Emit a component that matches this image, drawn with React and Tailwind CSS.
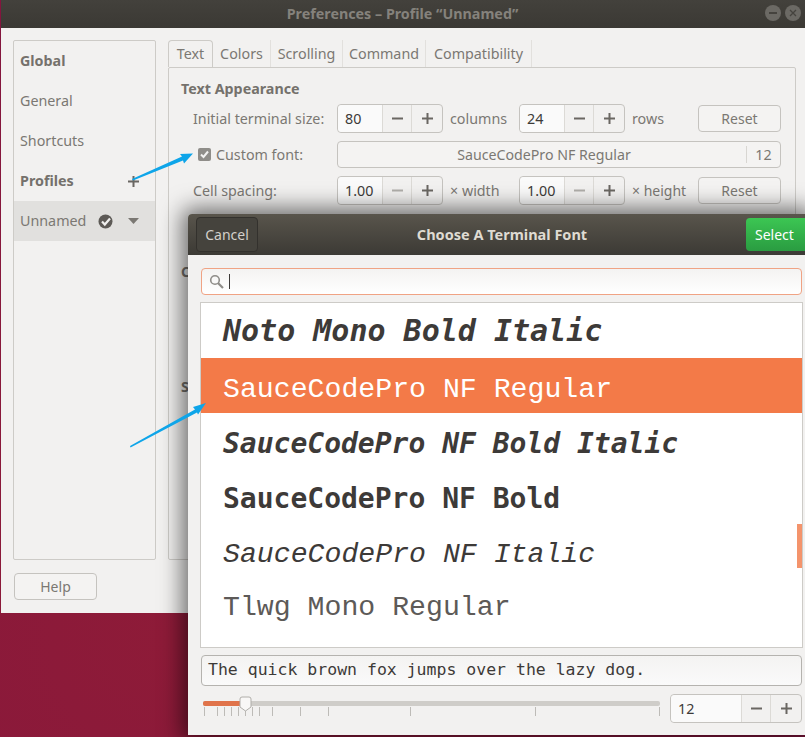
import React from "react";

const ui = { fontFamily: '"Noto Sans", "Open Sans", sans-serif' };

function Spin({ value, dimMinus, w = "w-[106px]", entry = "w-[45px]", focus }) {
  return (
    <div className={`flex h-[29px] ${w} shrink-0 rounded-[4px] border border-[#c5c3bf] bg-[#f2f1f0]`}>
      <div className={`${entry} flex items-center rounded-l-[4px] border-r border-[#dcdad6] bg-[#fafafa] pl-[7px] text-[14.3px] ${focus ? "text-[#3d3a38]" : "text-[#5e5b57]"}`}>{value}</div>
      <div className={`flex w-[29px] items-center justify-center border-r border-[#dcdad6] ${dimMinus ? "text-[#b0aeaa]" : "text-[#6a6762]"}`}>
        <svg width="11" height="11" viewBox="0 0 11 11"><rect x="0" y="4.5" width="11" height="2" fill="currentColor" /></svg>
      </div>
      <div className="flex flex-1 items-center justify-center text-[#6a6762]">
        <svg width="11" height="11" viewBox="0 0 11 11"><path d="M0 4.5h4.5V0h2v4.5H11v2H6.500V11h-2V6.500H0z" fill="currentColor" /></svg>
      </div>
    </div>
  );
}

function Btn({ children, className = "" }) {
  return (
    <div className={`flex items-center justify-center rounded-[4px] border border-[#c5c3bf] bg-[#f4f3f2] text-[14px] text-[#7b7873] ${className}`}>{children}</div>
  );
}

function Side({ children, bold, active, right }) {
  return (
    <div className={`flex h-[40px] items-center justify-between pl-[6px] pr-[16px] text-[14.3px] ${bold ? "font-bold text-[#75716c]" : "text-[#7b7873]"} ${active ? "bg-[#e1e0de]" : ""}`}>
      <span>{children}</span>
      {right}
    </div>
  );
}

const tabs = [
  ["Text", "w-[45px]"],
  ["Colors", "w-[58px]"],
  ["Scrolling", "w-[72px]"],
  ["Command", "w-[83px]"],
  ["Compatibility", "w-[106px]"],
];

const fonts = [
  { t: "Noto Mono Bold Italic", c: "font-bold italic text-[30px] text-[#3d3a38]", f: '"DejaVu Sans Mono", monospace' },
  { t: "SauceCodePro NF Regular", c: "pt-[10px] text-[28.2px] text-white bg-[#f37a48]", f: '"Liberation Mono", monospace' },
  { t: "SauceCodePro NF Bold Italic", c: "font-bold italic text-[28px] text-[#3d3a38] mt-[2px] pt-[2px]", f: '"DejaVu Sans Mono", monospace' },
  { t: "SauceCodePro NF Bold", c: "font-bold text-[28px] text-[#3d3a38] pt-[2px]", f: '"DejaVu Sans Mono", monospace' },
  { t: "SauceCodePro NF Italic", c: "italic text-[28.2px] text-[#3d3a38] pt-[6px]", f: '"Liberation Mono", monospace' },
  { t: "Tlwg Mono Regular", c: "pt-[2px] text-[28.2px] text-[#5d5a58]", f: '"Liberation Mono", monospace' },
];

const ticks = [204, 217, 224, 231, 238, 245, 252, 259, 272, 300, 328, 410, 535, 659];

export default function App() {
  return (
    <div className="relative h-[737px] w-[805px] overflow-hidden bg-[radial-gradient(circle_at_170px_640px,#8e1b38,#7f1340)]" style={ui}>
      {/* Preferences window */}
      <div className="ml-[1px] flex h-[613px] flex-col bg-[#f2f1f0]">
        <div className="relative flex h-[28px] items-center justify-center bg-gradient-to-b from-[#43413c] to-[#3b3934] text-[14.3px] font-bold text-[#85827c]">
          <span className="-ml-[1px]">Preferences – Profile “Unnamed”</span>
          <div className="absolute right-[4px] top-[5px] flex gap-[4px]">
            <div className="flex h-[16px] w-[16px] items-center justify-center rounded-full bg-[#6b6964]">
              <div className="h-[2px] w-[8px] bg-[#45433e]" />
            </div>
            <div className="flex h-[16px] w-[16px] items-center justify-center rounded-full bg-[#6b6964]">
              <svg width="8" height="8" viewBox="0 0 8 8"><path d="M1 1l6 6M7 1L1 7" stroke="#45433e" strokeWidth="1.300" /></svg>
            </div>
          </div>
        </div>
        <div className="flex flex-1 flex-col pl-[12px] pr-[9px] pt-[12px]">
          <div className="flex h-[520px] gap-[12px]">
            <div className="w-[143px] shrink-0 rounded-[2px] border border-[#cdcbc7] bg-[#f2f1f0]">
              <Side bold>Global</Side>
              <Side>General</Side>
              <Side>Shortcuts</Side>
              <Side bold right={
                <svg width="11" height="11" viewBox="0 0 11 11"><path d="M0 4.500h4.500V0h2v4.500H11v2H6.500V11h-2V6.500H0z" fill="#6a6762" /></svg>
              }>Profiles</Side>
              <Side active right={
                <div className="flex items-center gap-[15px]">
                  <svg width="15" height="15" viewBox="0 0 15 15"><circle cx="7.500" cy="7.500" r="7" fill="#5d5a56" /><path d="M4 7.500l2.800 3L12 4.500" stroke="#f0efee" strokeWidth="2.200" fill="none" /></svg>
                  <svg width="11" height="6" viewBox="0 0 11 6"><path d="M0 0h11L5.500 6z" fill="#7b7873" /></svg>
                </div>
              }>Unnamed</Side>
            </div>
            <div className="flex flex-1 flex-col">
              <div className="flex h-[27px] text-[14.3px] text-[#7b7873]">
                {tabs.map(([t, w], i) => (
                  <div key={t} className={`flex items-center justify-center ${w} ${i === 0 ? "rounded-t-[4px] border border-b-0 border-[#cdcbc7] pb-[1px]" : "border-r border-[#e2e0dd]"}`}>{t}</div>
                ))}
              </div>
              <div className="flex flex-1 flex-col rounded-[2px] border border-[#cdcbc7] pl-[12px] pr-[14px] pt-[11px] text-[14.3px] text-[#7b7873]">
                <div className="mb-[5px] h-[20px] font-bold leading-[20px] text-[#75716c]">Text Appearance</div>
                <div className="flex h-[29px] items-center">
                  <div className="w-[156px] shrink-0 pl-[12px]">Initial terminal size:</div>
                  <Spin value="80" focus />
                  <div className="w-[76px] pl-[7px]">columns</div>
                  <Spin value="24" focus />
                  <div className="flex-1 pl-[7px]">rows</div>
                  <Btn className="h-[27px] w-[83px]">Reset</Btn>
                </div>
                <div className="mt-[8px] flex h-[27px] items-center">
                  <div className="flex w-[156px] shrink-0 items-center pl-[17px]">
                    <div className="mr-[5px] flex h-[13px] w-[13px] items-center justify-center rounded-[2px] bg-[#8f8d89]">
                      <svg width="9" height="9" viewBox="0 0 9 9"><path d="M1 4.500l2.500 2.500L8 1.500" stroke="#f2f1f0" strokeWidth="2" fill="none" /></svg>
                    </div>
                    Custom font:
                  </div>
                  <div className="flex h-[27px] flex-1 items-center rounded-[4px] border border-[#c5c3bf] bg-[#f4f3f2]">
                    <div className="flex-1 pl-[4px] text-center text-[14.2px]">SauceCodePro NF Regular</div>
                    <div className="flex h-[17px] w-[34px] items-center justify-center border-l border-[#d8d6d2]">12</div>
                  </div>
                </div>
                <div className="mt-[8px] flex h-[29px] items-center">
                  <div className="w-[156px] shrink-0 pl-[12px]">Cell spacing:</div>
                  <Spin value="1.00" dimMinus focus />
                  <div className="w-[76px] pl-[7px]">× width</div>
                  <Spin value="1.00" dimMinus focus />
                  <div className="flex-1 whitespace-nowrap pl-[7px] text-[14px]">× height</div>
                  <Btn className="h-[27px] w-[83px]">Reset</Btn>
                </div>
                <div className="mt-[56px] font-bold text-[#75716c]">Color</div>
                <div className="mt-[94px] font-bold text-[#75716c]">Sound</div>
              </div>
            </div>
          </div>
          <Btn className="ml-[1px] mt-[13px] h-[27px] w-[83px] border-[#bdbbb7]">Help</Btn>
        </div>
      </div>

      {/* Font chooser dialog, floating over the window */}
      <div className="absolute left-[188px] top-[214px] flex h-[521px] w-[620px] flex-col rounded-t-[4px] bg-[#f2f1f0] shadow-[0_0_22px_6px_rgba(0,0,0,0.55)]">
        <div className="relative flex h-[41px] shrink-0 items-center justify-center rounded-t-[4px] bg-gradient-to-b from-[#59554c] to-[#3c3a35]">
          <div className="absolute left-[8px] top-[3px] flex h-[35px] w-[62px] items-center justify-center rounded-[4px] border border-[#33312d] bg-[#45433d] text-[14px] text-[#d3d0ca]">Cancel</div>
          <div className="pl-[8px] text-[14.5px] font-bold text-[#dfdbd2]">Choose A Terminal Font</div>
          <div className="absolute left-[558px] top-[4px] flex h-[33px] w-[62px] items-center justify-start rounded-l-[4px] bg-gradient-to-b from-[#3cc653] to-[#2a9c41] pl-[9px] text-[14px] text-white">Select</div>
        </div>
        <div className="flex flex-1 flex-col pl-[12px] pr-[5px] pt-[13px]">
          <div className="ml-[1px] mr-[1px] flex h-[27px] items-center rounded-[4px] border border-[#f0a384] bg-gradient-to-b from-[#f4f3f2] to-white pl-[7px]">
            <svg width="15" height="15" viewBox="0 0 15 15" fill="none"><circle cx="6" cy="6" r="4.300" stroke="#8f8d89" strokeWidth="1.600" /><path d="M9 9l5 5" stroke="#8f8d89" strokeWidth="2.200" /></svg>
            <div className="ml-[5px] h-[15px] w-[1px] bg-[#3d3a38]" />
          </div>
          <div className="relative mt-[7px] h-[346px] border border-[#cdcbc7] bg-white">
            {fonts.map((f) => (
              <div key={f.t} className={`flex h-[55px] items-center whitespace-pre pl-[22px] ${f.c}`} style={{ fontFamily: f.f }}>{f.t}</div>
            ))}
            <div className="absolute right-0 top-[221px] h-[44px] w-[5px] bg-[#f4946c]" />
          </div>
          <div className="ml-[1px] mr-[1px] mt-[7px] flex h-[31px] items-center rounded-[4px] border border-[#b5b3af] bg-gradient-to-b from-[#f4f3f2] to-[#fafafa] pl-[6px] text-[16.5px] text-[#3d3a38]" style={{ fontFamily: '"DejaVu Sans Mono", monospace' }}>
            The quick brown fox jumps over the lazy dog.
          </div>
          <div className="mt-[8px] flex h-[29px] items-start">
            <div className="relative ml-[3px] h-[29px] w-[457px] shrink-0">
              <div className="absolute left-0 right-0 top-[7px] h-[5px] rounded-[2px] bg-[#cfcdc9]" />
              <div className="absolute left-0 top-[7px] h-[5px] w-[37px] rounded-l-[2px] bg-[#e0734a]" />
              {ticks.map((x) => (
                <div key={x} className="absolute top-[13px] h-[9px] w-[1px] bg-[#bdbbb7]" style={{ left: x - 203 }} />
              ))}
              <svg className="absolute left-[36px] top-[2px]" width="13" height="16" viewBox="0 0 13 16"><path d="M1 3a2 2 0 0 1 2-2h7a2 2 0 0 1 2 2v8l-5.500 4L1 11z" fill="#f8f7f6" stroke="#b0aeaa" /></svg>
            </div>
            <div className="ml-[10px]">
              <Spin value="12" w="w-[132px]" entry="w-[71px]" focus />
            </div>
          </div>
        </div>
      </div>

      {/* Annotation arrows */}
      <svg className="absolute left-0 top-0" width="805" height="737" viewBox="0 0 805 737" fill="none">
        <path d="M132 179L182 156.500L180 154L193 153.500L184 163.500L183 160.500L133 180.500z" fill="#0ea5e9" />
        <path d="M130 446L195 409.500L193 407L206 403L198 414.500L197 412.500L130.500 447.500z" fill="#0ea5e9" />
      </svg>
    </div>
  );
}
